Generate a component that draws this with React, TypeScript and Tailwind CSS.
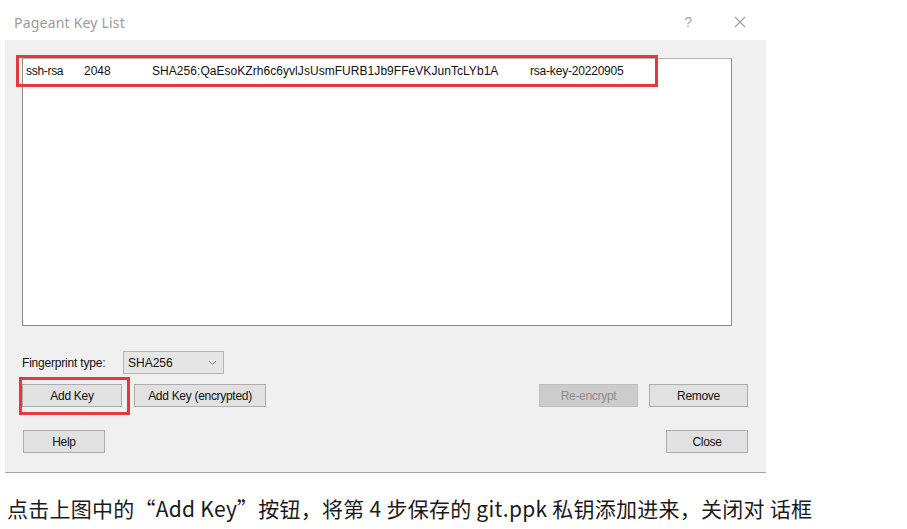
import React from "react";

function Btn({ children, w, disabled }: { children: React.ReactNode; w: string; disabled?: boolean }) {
  return (
    <div
      className={`${w} h-[23px] flex items-center justify-center border text-[12px] tracking-[-0.3px] ${
        disabled ? "bg-[#cccccc] border-[#bfbfbf] text-[#8d8d8d]" : "bg-[#e1e1e1] border-[#adadad] text-[#111]"
      }`}
    >
      {children}
    </div>
  );
}

export default function App() {
  return (
    <div className="w-[907px] h-[529px] bg-white overflow-hidden" style={{ fontFamily: '"Liberation Sans", Arial, sans-serif' }}>
      {/* Title bar */}
      <div className="ml-[5px] w-[761px] h-[40px] flex items-center pl-[9px] pt-[4px]">
        <div className="text-[14px] text-[#9b9b9b] tracking-[0.2px]" style={{ fontFamily: '"Noto Sans", sans-serif' }}>
          Pageant Key List
        </div>
        <div className="ml-auto flex items-center">
          <span className="text-[14px] text-[#a8a8a8] mr-[42px]">?</span>
          <svg width="12" height="12" viewBox="0 0 12 12" className="mr-[20px]">
            <path d="M1 1 L11 11 M11 1 L1 11" stroke="#a0a0a0" strokeWidth="1.1" />
          </svg>
        </div>
      </div>
      {/* Body */}
      <div className="ml-[5px] w-[761px] h-[433px] bg-[#f0f0f0] border-b border-[#a3a3a3] pl-[17px] pt-[18px]">
        <div className="relative w-[710px] h-[268px] bg-white border border-[#8a8a8a] border-t-[#b5b5b5]">
          <div className="flex items-center h-[22px] mt-[1px] text-[12px] text-[#111]">
            <span className="ml-[3px] w-[58px] tracking-[-0.3px]">ssh-rsa</span>
            <span className="w-[68px]">2048</span>
            <span className="w-[378px] tracking-[0.05px]">SHA256:QaEsoKZrh6c6yvlJsUsmFURB1Jb9FFeVKJunTcLYb1A</span>
            <span className="tracking-[-0.2px]">rsa-key-20220905</span>
          </div>
          <div className="absolute left-[-7px] top-[-4px] w-[642px] h-[32px] border-[3px] border-[#e2383e]" />
        </div>
        <div className="flex items-center mt-[25px] h-[23px]">
          <span className="w-[101px] text-[12px] text-[#111] tracking-[-0.2px]">Fingerprint type:</span>
          <div className="w-[101px] h-[23px] bg-[#e6e6e6] border border-[#b4b4b4] flex items-center pl-[4px] pr-[6px] text-[12px] text-[#111]">
            <span>SHA256</span>
            <svg width="9" height="6" viewBox="0 0 9 6" className="ml-auto">
              <path d="M1 1 L4.5 4.5 L8 1" fill="none" stroke="#7a7a7a" strokeWidth="1" />
            </svg>
          </div>
        </div>
        <div className="flex items-center mt-[10px]">
          <div className="relative">
            <Btn w="w-[100px]">Add Key</Btn>
            <div className="absolute left-[-3px] top-[-7px] w-[111px] h-[38px] border-[3px] border-[#e2383e]" />
          </div>
          <div className="ml-[12px]">
            <Btn w="w-[132px]">Add Key (encrypted)</Btn>
          </div>
          <div className="ml-[273px]">
            <Btn w="w-[99px]" disabled>
              Re-encrypt
            </Btn>
          </div>
          <div className="ml-[11px]">
            <Btn w="w-[99px]">Remove</Btn>
          </div>
        </div>
        <div className="flex items-center mt-[23px]">
          <div className="ml-[1px]">
            <Btn w="w-[82px]">Help</Btn>
          </div>
          <div className="ml-auto mr-[18px]">
            <Btn w="w-[82px]">Close</Btn>
          </div>
        </div>
      </div>
      {/* Caption */}
      <div
        className="mt-[21px] ml-[7px] text-[21px] leading-[28px] tracking-[0.25px] text-[#1a1a1a] whitespace-nowrap"
        style={{ fontFamily: '"Noto Sans CJK SC", sans-serif' }}
      >
        点击上图中的“Add Key”按钮，将第 4 步保存的 git.ppk 私钥添加进来，关闭对 话框
      </div>
    </div>
  );
}
